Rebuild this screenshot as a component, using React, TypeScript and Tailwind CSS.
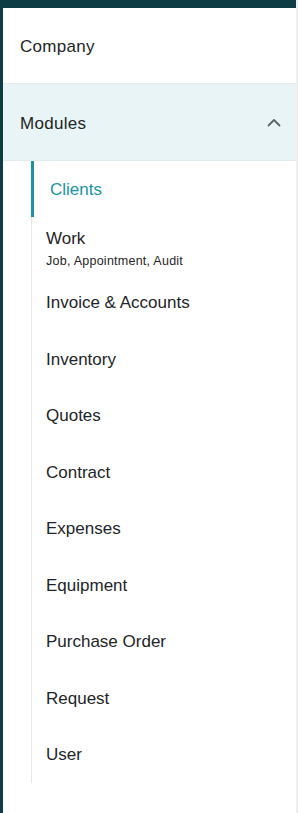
import React from "react";

const items = [
  "Invoice & Accounts",
  "Inventory",
  "Quotes",
  "Contract",
  "Expenses",
  "Equipment",
  "Purchase Order",
  "Request",
  "User",
];

export default function App() {
  return (
    <div
      className="w-[300px] h-[813px] bg-white flex"
      style={{ fontFamily: '"Liberation Sans", Arial, sans-serif' }}
    >
      <div className="w-[296px] h-full bg-[#0d3c44] pl-[3px] pt-[8px] flex">
        <div className="flex-1 bg-white flex flex-col text-[#1e2528]">
          <div className="h-[76px] flex items-center pl-[17px] pt-[3px] text-[17px] tracking-[0.3px] border-b border-[#e6eaeb]">
            Company
          </div>
          <div className="h-[77px] flex items-center justify-between pl-[17px] pr-[15px] pt-[3px] bg-[#e8f4f5] text-[17px] tracking-[0.3px] border-b border-[#e2ecee]">
            <span>Modules</span>
            <svg width="14" height="9" viewBox="0 0 14 9" fill="none" className="mb-[3px]">
              <path d="M1.5 7.5L7 2l5.5 5.5" stroke="#5b6668" strokeWidth="1.8" strokeLinecap="round" strokeLinejoin="round" />
            </svg>
          </div>
          <div className="ml-[28px] border-l border-[#e4e6e7] flex flex-col">
            <div className="h-[56px] flex items-center relative pl-[18px] pt-[2px] text-[17px] text-[#1a93a5]">
              <div className="absolute left-[-1px] top-0 bottom-0 w-[3px] bg-[#1a93a5]" />
              Clients
            </div>
            <div className="h-[57px] flex flex-col justify-center pl-[14px] pt-[7px]">
              <span className="text-[17px] leading-[20px]">Work</span>
              <span className="text-[12.5px] leading-[16px] mt-[4px] tracking-[0.25px]">Job, Appointment, Audit</span>
            </div>
            {items.map((t) => (
              <div key={t} className="h-[56.5px] flex items-center pl-[14px] pt-[1px] text-[17px]">
                {t}
              </div>
            ))}
          </div>
        </div>
      </div>
      <div className="w-[2px] h-full bg-[#eeeeee]" />
    </div>
  );
}
